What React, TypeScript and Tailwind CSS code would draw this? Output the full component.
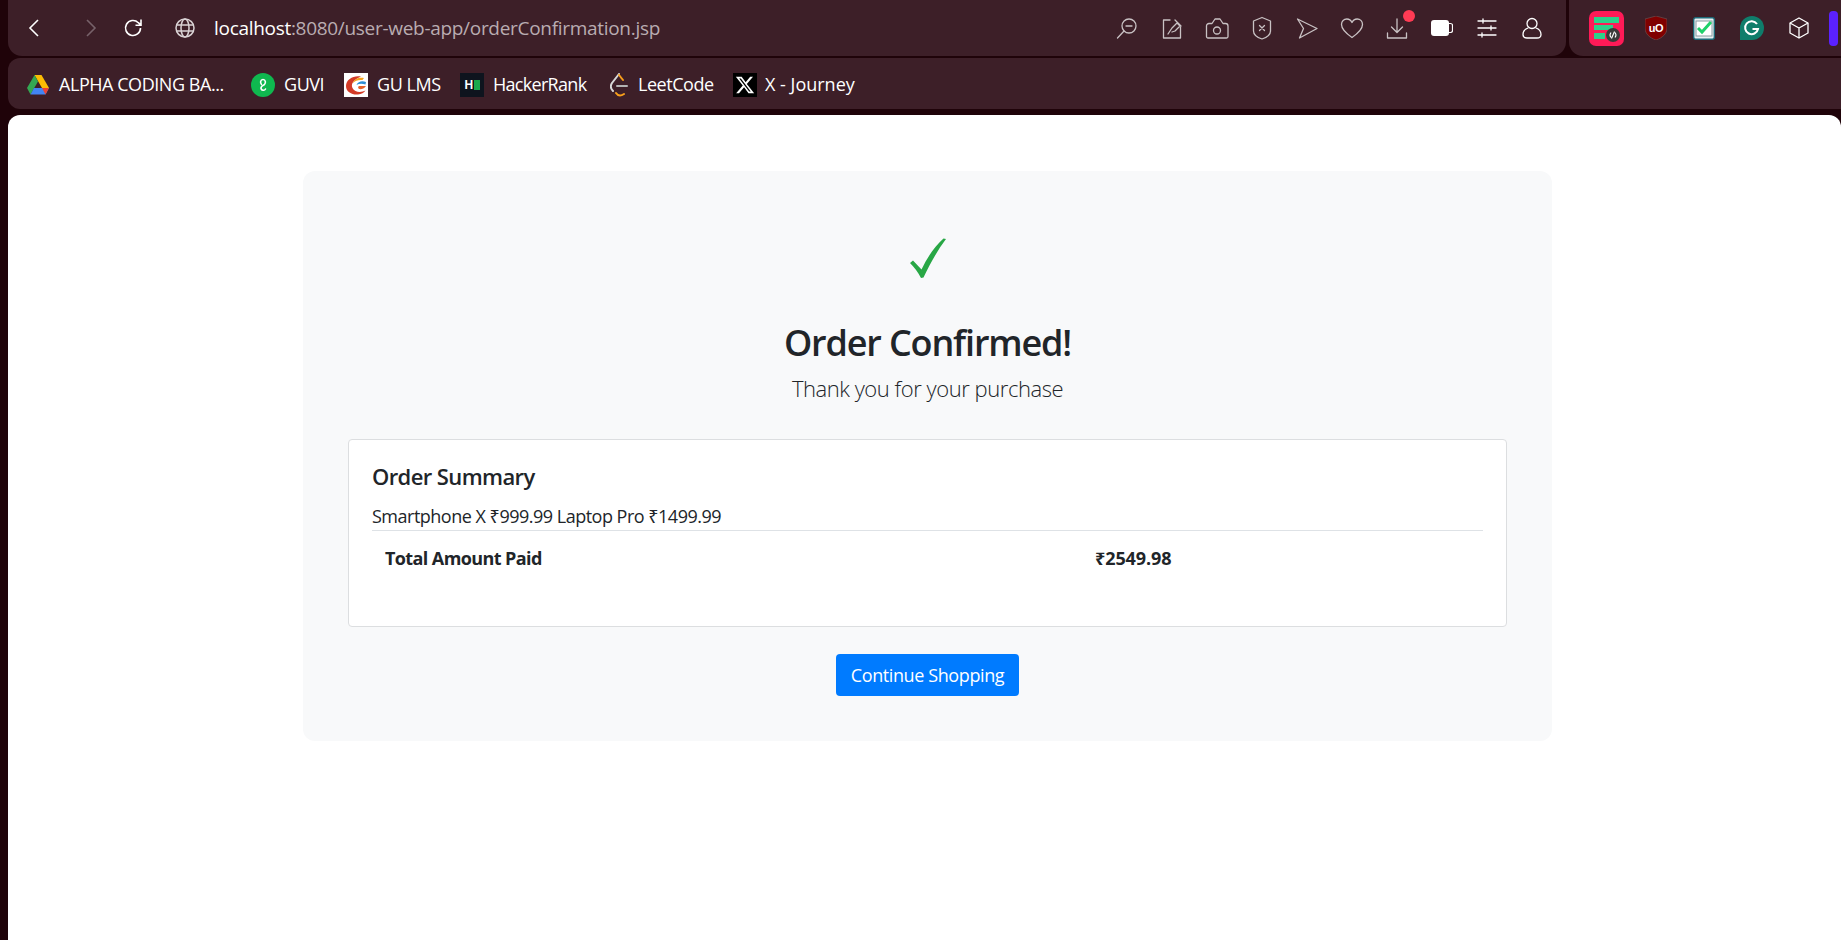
import React from "react";

const uiFont = "font-['Open_Sans','Noto_Sans',sans-serif]";

function Ico({ children, w = 24, h = 24, className = "" }: { children: React.ReactNode; w?: number; h?: number; className?: string }) {
  return (
    <svg width={w} height={h} viewBox={`0 0 ${w} ${h}`} fill="none" stroke="currentColor" strokeWidth="1.3" strokeLinecap="round" strokeLinejoin="round" className={`shrink-0 ${className}`}>
      {children}
    </svg>
  );
}

const toolbarIcons = [
  <Ico key="zoom"><circle cx="14" cy="10" r="7" /><path d="M9 15 2.5 22M11 10h6" /></Ico>,
  <Ico key="note"><path d="M10 4H3.5v18h17v-11" /><path d="m8 18 4-6 5-5 3 3-5 5-3 1M15 4l6 6" /></Ico>,
  <Ico key="camera"><path d="M3 22a1.5 1.5 0 0 1-1.5-1.5V10A2.500 2.500 0 0 1 4 7.500h3L10 3h5l3 4.500h2.500A2.500 2.500 0 0 1 23 10v10.500a1.500 1.500 0 0 1-1.500 1.500Z" /><circle cx="12" cy="14.500" r="3.500" /></Ico>,
  <Ico key="shield"><path d="M12 1.500 20.500 5v10c0 3.500-4 6.500-8.500 8-4.500-1.500-8.500-4.500-8.500-8V5Z" /><path d="m9.500 9.500 5 5M14.500 9.500l-5 5" /></Ico>,
  <Ico key="send"><path d="M2.500 3 22 12.500 4.500 22 8.500 12.500Z" /></Ico>,
  <Ico key="heart"><path d="M12 21.500C7 18 1.500 14 1.500 8.500 1.500 5 4 3 6.800 3 9 3 11 4.300 12 6.500 13 4.300 15 3 17.200 3 20 3 22.500 5 22.500 8.500 22.500 14 17 18 12 21.500Z" /></Ico>,
  <Ico key="download"><path d="M12 3v13M6.500 11l5.500 5.500 5.500-5.500M2.500 17v5h19v-5" /></Ico>,
];

function Battery() {
  return (
    <svg width="22" height="16" viewBox="0 0 22 16" className="shrink-0">
      <rect x="0" y="0" width="18" height="16" rx="3" fill="#fff" />
      <path d="M18 3.500h1.500a2 2 0 0 1 2 2v5a2 2 0 0 1-2 2H18" fill="none" stroke="#fff" strokeWidth="1.200" />
    </svg>
  );
}

function Drive() {
  return (
    <svg width="22" height="20" viewBox="0 0 22 20" className="shrink-0">
      <path d="M7.500 0h7L22 13h-7Z" fill="#fbbc04" />
      <path d="M7.500 0 0 13l3.500 6.500L11 6.500Z" fill="#34a853" />
      <path d="M3.500 19.500h15L22 13H7Z" fill="#4285f4" />
      <path d="m15 13 3.500 6.500L22 13Z" fill="#ea4335" />
    </svg>
  );
}

function Guvi() {
  return (
    <svg width="24" height="24" viewBox="0 0 24 24" className="shrink-0">
      <circle cx="12" cy="12" r="12" fill="#0fb84f" />
      <path d="M10.500 11.500C9 10 9.300 6.500 12 6.500s3 3.500 1.500 5c-1.500 1-4 1.800-3.500 4 .5 2 3.500 2.500 4.500.5" fill="none" stroke="#fff" strokeWidth="1.600" strokeLinecap="round" />
    </svg>
  );
}

function GuLms() {
  return (
    <svg width="24" height="24" viewBox="0 0 24 24" className="shrink-0">
      <rect width="24" height="24" fill="#fff" />
      <path d="M17 3.500C10 2 2 6 2 13c0 6 6 9 12 8.500 3.500-.3 6-2 7.500-4-3 1.500-7 2-10 .5-3-1.500-4.500-5-3-8 1.500-3 5-5 8.500-6.500Z" fill="#d33a26" />
      <path d="M20 5c-5-1-10 1-11 5 2-2.500 6-3.500 9.500-3Z" fill="#f6a21d" />
      <path d="M22 9c-4-1.500-8-.5-9.500 3 2.500-1.500 5.500-1.500 9-.5Z" fill="#2c8fd6" />
      <path d="M22 13h-6.500c-1.500 0-2 2-.5 3 2 .5 5 0 7-3Z" fill="#e5622a" />
    </svg>
  );
}

function HackerRank() {
  return (
    <span className="flex h-6 w-6 shrink-0 items-center justify-center gap-px bg-[#0e141e]">
      <span className="font-['Liberation_Sans',sans-serif] text-[12px] leading-none font-bold text-white">H</span>
      <span className="h-[10px] w-[6px] bg-[#1ba94c]" />
    </span>
  );
}

function LeetCode() {
  return (
    <svg width="18" height="24" viewBox="0 0 18 24" className="shrink-0" fill="none" strokeWidth="2" strokeLinecap="round">
      <path d="M9 1 2 10c-2 3-1 6 1 8" stroke="#d8d8d8" />
      <path d="M9 2 13 7" stroke="#f89f1b" />
      <path d="M7 13h10" stroke="#b3b3b3" />
      <path d="M6 20c2 3 5 3 8 1" stroke="#f89f1b" />
    </svg>
  );
}

function XLogo() {
  return (
    <span className="flex h-6 w-6 shrink-0 items-center justify-center bg-black">
      <svg width="20" height="20" viewBox="0 0 24 24" fill="#fff">
        <path d="M18.200 2.200h3.400l-7.400 8.500L23 21.800h-6.800l-5.300-7-6.100 7H1.400l7.900-9.100L1 2.200h7l4.800 6.400Zm-1.200 17.600h1.900L7 4.100H5Z" />
      </svg>
    </span>
  );
}

function PinkExt() {
  return (
    <svg width="35" height="35" viewBox="0 0 35 35" className="shrink-0">
      <rect width="35" height="35" rx="7" fill="#ff1a57" />
      <rect x="5" y="6" width="25" height="6" fill="#2dd08a" />
      <rect x="5" y="14" width="19" height="5" fill="#2dd08a" />
      <rect x="5" y="22" width="11" height="6" fill="#2dd08a" />
      <circle cx="24" cy="24" r="7" fill="#3a3a3a" />
      <path d="M25.500 20.500 22.500 27.500M22 21.500a4 4 0 0 0 0 5M26 21.500a4 4 0 0 1 0 5" stroke="#fff" strokeWidth="1.100" fill="none" />
    </svg>
  );
}

function Ublock() {
  return (
    <span className="relative flex h-[24px] w-[22px] shrink-0 items-center justify-center">
      <svg width="22" height="24" viewBox="0 0 22 24" className="absolute inset-0">
        <path d="M11 0 22 3v9c0 6-5 10-11 12C5 22 0 18 0 12V3Z" fill="#800000" stroke="#6b6b6b" strokeWidth="0.500" />
      </svg>
      <span className="relative font-['Liberation_Sans',sans-serif] text-[11px] leading-none font-bold tracking-[-0.5px] text-white">uO</span>
    </span>
  );
}

function CheckExt() {
  return (
    <svg width="22" height="23" viewBox="0 0 22 23" className="shrink-0">
      <rect x="0.700" y="0.700" width="20.600" height="21.600" rx="2" fill="#e8f0f2" stroke="#1d6a78" strokeWidth="1.400" />
      <rect x="3" y="4" width="16" height="15" fill="#fff" stroke="#8a9aa0" strokeWidth="1" />
      <path d="m5 11 4 4 9-10" fill="none" stroke="#1fd06a" strokeWidth="3" />
    </svg>
  );
}

function Grammarly() {
  return (
    <svg width="24" height="24" viewBox="0 0 24 24" className="shrink-0">
      <path d="M12 0a12 12 0 1 1 0 24H0V12A12 12 0 0 1 12 0Z" fill="#0f7d6b" />
      <path d="M17 8a6.500 6.500 0 1 0 1 5h-5.500" fill="none" stroke="#fff" strokeWidth="2" />
    </svg>
  );
}

function Cube() {
  return (
    <svg width="20" height="22" viewBox="0 0 20 22" fill="none" stroke="#fff" strokeWidth="1.300" strokeLinejoin="round" className="shrink-0">
      <path d="M10 1 19 6v10l-9 5-9-5V6Z" />
      <path d="m1 6 9 5 9-5M10 11v10" />
    </svg>
  );
}

const bookmarks = [
  { label: "ALPHA CODING BA...", icon: <Drive />, width: "w-[224px]", gap: "gap-[10px]", track: "" },
  { label: "GUVI", icon: <Guvi />, width: "w-[93px]", gap: "gap-[9px]", track: "" },
  { label: "GU LMS", icon: <GuLms />, width: "w-[116px]", gap: "gap-[9px]", track: "" },
  { label: "HackerRank", icon: <HackerRank />, width: "w-[150px]", gap: "gap-[9px]", track: "tracking-[-0.7px]" },
  { label: "LeetCode", icon: <LeetCode />, width: "w-[123px]", gap: "gap-[10px]", track: "" },
  { label: "X - Journey", icon: <XLogo />, width: "w-[130px]", gap: "gap-[8px]", track: "tracking-[0px]" },
];

export default function App() {
  return (
    <div className={`flex h-[940px] flex-col overflow-hidden bg-[#1f0309] pl-2 ${uiFont}`}>
      {/* browser chrome */}
      <div className="flex h-[56px] gap-[3px]">
        <div className="flex w-[1558px] items-center rounded-b-[14px] bg-[#3d1f28] pl-[19px]">
          <svg width="14" height="18" viewBox="0 0 14 18" fill="none" stroke="#fff" strokeWidth="1.600" className="shrink-0"><path d="M11 1 3 9l8 8" /></svg>
          <svg width="14" height="18" viewBox="0 0 14 18" fill="none" stroke="#77626a" strokeWidth="1.600" className="ml-[43px] shrink-0"><path d="m3 1 8 8-8 8" /></svg>
          <svg width="20" height="20" viewBox="0 0 20 20" fill="none" stroke="#fff" strokeWidth="1.600" className="ml-[25px] shrink-0"><path d="M17.500 10a7.500 7.500 0 1 1-2.200-5.300L18 7.200M18 1.500v5.700h-5.500" /></svg>
          <svg width="20" height="20" viewBox="0 0 20 20" fill="none" stroke="#d9d2d4" strokeWidth="1.500" className="ml-[32px] shrink-0"><circle cx="10" cy="10" r="9" /><ellipse cx="10" cy="10" rx="4" ry="9" /><path d="M1.500 7h17M1.500 13h17" /></svg>
          <div className="ml-[19px] text-[19px] tracking-[-0.3px] whitespace-nowrap text-[#b9acb1]">
            <span className="text-white">localhost</span>:8080/user-web-app/orderConfirmation.jsp
          </div>
          <div className="ml-auto flex items-center gap-[21px] pr-[22px] text-[#c9c2c4]">
            {toolbarIcons.map((ic, i) => (
              <span key={i} className="relative block">
                {ic}
                {i === 6 && <span className="absolute top-[-6px] left-[18px] h-[12px] w-[12px] rounded-full bg-[#ff3b54]" />}
              </span>
            ))}
            <span className="flex w-[24px] justify-center"><Battery /></span>
            <span className="text-white"><Ico><path d="M3 5h18M3 12h18M3 19h18M8 3v4M16 10v4M7 17v4" /></Ico></span>
            <span className="text-white"><Ico><circle cx="12" cy="7.500" r="5" /><path d="M8 12c-3 1-5 3.500-5 6.500 0 2.500 2 3.500 4 3.500h10c2 0 4-1 4-3.500 0-3-2-5.500-5-6.500" /></Ico></span>
          </div>
        </div>
        <div className="flex flex-1 items-center rounded-bl-[14px] bg-[#3d1f28] pl-[20px]">
          <PinkExt />
          <span className="ml-[21px]"><Ublock /></span>
          <span className="ml-[26px]"><CheckExt /></span>
          <span className="ml-[25px]"><Grammarly /></span>
          <span className="ml-[25px]"><Cube /></span>
          <span className="ml-[20px] h-[35px] w-[9px] rounded-[4px] bg-[#5b21ff]" />
        </div>
      </div>

      {/* bookmarks */}
      <div className="mt-[2px] flex h-[51px] items-center rounded-l-[12px] bg-[#3d1f28] pt-[2px] pl-[19px] text-[18px] tracking-[-0.45px] text-white">
        {bookmarks.map((b) => (
          <div key={b.label} className={`flex items-center ${b.width} ${b.gap}`}>
            {b.icon}
            <span className={`whitespace-nowrap ${b.track}`}>{b.label}</span>
          </div>
        ))}
      </div>

      {/* page */}
      <div className="mt-[6px] flex-1 rounded-t-[12px] bg-white pt-[56px] pl-[295px] text-[#212529]">
        <div className="flex h-[570px] w-[1249px] flex-col items-center rounded-[12px] bg-[#f8f9fa] px-[45px] pt-[67px]">
          <svg width="36" height="40" viewBox="0 0 36 40" className="shrink-0">
            <path d="M0 25 3 22.500 11.500 31.500C17 20 24 9 33.500 .5L36 1C27 13 20 26 13.500 39.500L11 40C8 34 4 29 0 25Z" fill="#28a745" />
          </svg>
          <h1 className="mt-[41px] text-[36px] leading-[48px] font-semibold tracking-[-1.15px]">Order Confirmed!</h1>
          <p className="mt-[6px] text-[22px] leading-[30px] font-light tracking-[-0.45px]">Thank you for your purchase</p>
          <div className="mt-[36px] h-[188px] w-full rounded-[4px] border border-[#dcdee0] bg-white px-[23px] pt-[20px]">
            <h5 className="text-[22px] leading-[32px] font-semibold tracking-[-0.6px]">Order Summary</h5>
            <div className="mt-[10px] border-b border-[#dee2e6] text-[18px] leading-[28px] font-normal tracking-[-0.5px]">
              Smartphone X ₹999.99 Laptop Pro ₹1499.99
            </div>
            <table className="w-full text-[18px] font-bold">
              <tbody>
                <tr>
                  <td className="w-[723px] px-[13px] pt-[13px] leading-[28px] tracking-[-0.6px]">Total Amount Paid</td>
                  <td className="pt-[13px] leading-[28px] tracking-[-0.1px]">₹2549.98</td>
                </tr>
              </tbody>
            </table>
          </div>
          <button className="mt-[27px] h-[42px] w-[183px] rounded-[4px] bg-[#007bff] text-[18px] tracking-[-0.4px] text-white">Continue Shopping</button>
        </div>
      </div>
    </div>
  );
}
